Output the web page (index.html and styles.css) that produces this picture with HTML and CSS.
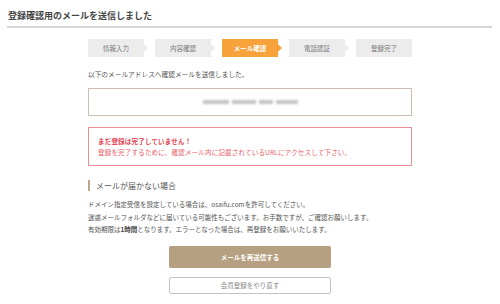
FILE: index.html
```html
<!DOCTYPE html>
<html lang="ja">
<head>
    <meta charset="UTF-8">
    <meta name="viewport" content="width=device-width, initial-scale=1.0">
    <title>登録確認用のメールを送信しました</title>
    <link rel="stylesheet" href="styles.css">
</head>
<body>
    <div class="page-head">
        <h1>登録確認用のメールを送信しました</h1>
    </div>

    <div class="content">
        <ol class="steps">
            <li class="step">情報入力</li>
            <li class="step">内容確認</li>
            <li class="step current">メール確認</li>
            <li class="step">電話認証</li>
            <li class="step last">登録完了</li>
        </ol>

        <p class="lead">以下のメールアドレスへ確認メールを送信しました。</p>

        <div class="address-box">
            <span class="blur b1"></span>
            <span class="blur b2"></span>
            <span class="blur b3"></span>
            <span class="blur b4"></span>
        </div>

        <div class="alert">
            <p class="alert-title">まだ登録は完了していません！</p>
            <p>登録を完了するために、確認メール内に記載されているURLにアクセスして下さい。</p>
        </div>

        <h2 class="sub-head">メールが届かない場合</h2>
        <p class="notes">
            ドメイン指定受信を設定している場合は、osaifu.comを許可してください。<br>
            迷惑メールフォルダなどに届いている可能性もございます。お手数ですが、ご確認お願いします。<br>
            有効期限は<b>1時間</b>となります。エラーとなった場合は、再登録をお願いいたします。
        </p>

        <div class="actions">
            <button type="button" class="btn-primary">メールを再送信する</button>
            <button type="button" class="btn-outline">会員登録をやり直す</button>
        </div>
    </div>
</body>
</html>
```

FILE: styles.css
```css
* {
    box-sizing: border-box;
}
body {
    margin: 0;
    font-family: "Noto Sans CJK JP", "Noto Sans", sans-serif;
    color: #555;
    background: #fff;
}
.page-head {
    margin: 0 8px 0 7px;
    padding: 10px 0 4px 1px;
    border-bottom: 2px solid #d6d6d6;
}
.page-head h1 {
    margin: 0;
    font-size: 9px;
    line-height: 12px;
    font-weight: bold;
    color: #444;
}
.content {
    width: 324px;
    margin: 0 auto;
    padding-top: 11px;
}
.steps {
    display: flex;
    gap: 11px;
    list-style: none;
    margin: 0;
    padding: 0;
}
.step {
    position: relative;
    width: 56px;
    height: 18px;
    line-height: 18px;
    text-align: center;
    font-size: 6.5px;
    color: #777;
    background: #ececec;
}
.step::after {
    content: "";
    position: absolute;
    top: 5px;
    right: -4px;
    border-top: 4px solid transparent;
    border-bottom: 4px solid transparent;
    border-left: 4px solid #ececec;
}
.step.last::after {
    display: none;
}
.step.current {
    background: #f7a23a;
    color: #fff;
    font-weight: bold;
}
.step.current::after {
    border-left-color: #f7a23a;
}
.lead {
    margin: 12px 0 0;
    font-size: 6.7px;
    line-height: 11px;
    color: #555;
}
.address-box {
    display: flex;
    justify-content: center;
    align-items: center;
    gap: 3px;
    height: 28px;
    margin-top: 8px;
    border: 1px solid #cdbdb3;
}
.blur {
    height: 4px;
    background: #c4c4c4;
    filter: blur(0.8px);
}
.b1 { width: 26px; }
.b2 { width: 24px; }
.b3 { width: 14px; }
.b4 { width: 22px; }
.alert {
    margin-top: 11px;
    padding: 8px 9px 7px;
    border: 1px solid #ec8e96;
    color: #e8606a;
    font-size: 6.5px;
    line-height: 11px;
    letter-spacing: 0.2px;
}
.alert p {
    margin: 0;
}
.alert-title {
    font-weight: bold;
    color: #e2414e;
}
.sub-head {
    margin: 14px 0 0;
    padding-left: 6px;
    border-left: 2px solid #bda98f;
    font-size: 8px;
    line-height: 11px;
    font-weight: normal;
    color: #555;
}
.notes {
    margin: 7px 0 0;
    font-size: 6.5px;
    line-height: 12.5px;
    color: #555;
}
.notes b {
    color: #444;
}
.actions {
    display: flex;
    flex-direction: column;
    align-items: center;
    gap: 9px;
    margin-top: 10px;
}
.actions button {
    width: 162px;
    font-family: inherit;
    font-size: 6.5px;
    cursor: pointer;
}
.btn-primary {
    height: 22px;
    border: none;
    border-radius: 2px;
    background: #b6a082;
    color: #fff;
    font-weight: bold;
}
.btn-outline {
    height: 17px;
    border: 1px solid #c2c2c2;
    border-radius: 2px;
    background: #fff;
    color: #888;
}
```
